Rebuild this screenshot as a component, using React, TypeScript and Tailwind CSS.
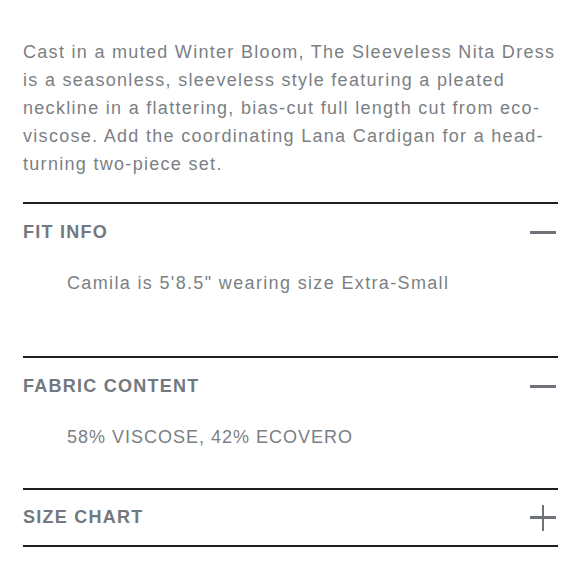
export default function App() {
  return (
    <div className="min-h-screen bg-white" style={{ fontFamily: '"Liberation Sans", Arial, sans-serif' }}>
      <div className="px-[23px] pt-[38px] pr-[22px]">
        {/* Description */}
        <p className="text-[18px] leading-[28px] tracking-[1.3px] text-[#7b7f84]">
          Cast in a muted Winter Bloom, The Sleeveless Nita Dress is a seasonless, sleeveless style featuring a pleated
          neckline in a flattering, bias-cut full length cut from eco-viscose. Add the coordinating Lana Cardigan for a
          head-turning two-piece set.
        </p>

        <div className="mt-[24px]">
          {/* Fit Info */}
          <div className="border-t-2 border-[#1f1f1f]">
            <div className="flex items-center justify-between h-[57px]">
              <h3 className="text-[18px] font-bold tracking-[1.25px] text-[#72787e]">FIT INFO</h3>
              <span className="block w-[26px] h-[2.5px] bg-[#6e7379] mr-[2px]" />
            </div>
            <p className="pl-[44px] pt-[8px] pb-[59px] text-[18px] leading-[28px] tracking-[1.35px] text-[#7b7f84]">
              Camila is 5'8.5" wearing size Extra-Small
            </p>
          </div>

          {/* Fabric Content */}
          <div className="border-t-2 border-[#1f1f1f]">
            <div className="flex items-center justify-between h-[57px]">
              <h3 className="text-[18px] font-bold tracking-[1.25px] text-[#72787e]">FABRIC CONTENT</h3>
              <span className="block w-[26px] h-[2.5px] bg-[#6e7379] mr-[2px]" />
            </div>
            <p className="pl-[44px] pt-[8px] pb-[37px] text-[18px] leading-[28px] tracking-[1px] text-[#7b7f84]">
              58% VISCOSE, 42% ECOVERO
            </p>
          </div>

          {/* Size Chart */}
          <div className="border-y-2 border-[#1f1f1f]">
            <div className="flex items-center justify-between h-[55px]">
              <h3 className="text-[18px] font-bold tracking-[1.25px] text-[#72787e]">SIZE CHART</h3>
              <span className="relative block w-[26px] h-[26px] mr-[2px]">
                <span className="absolute left-0 top-[11.75px] w-[26px] h-[2.5px] bg-[#6e7379]" />
                <span className="absolute top-0 left-[11.75px] w-[2.5px] h-[26px] bg-[#6e7379]" />
              </span>
            </div>
          </div>
        </div>
      </div>
    </div>
  )
}
